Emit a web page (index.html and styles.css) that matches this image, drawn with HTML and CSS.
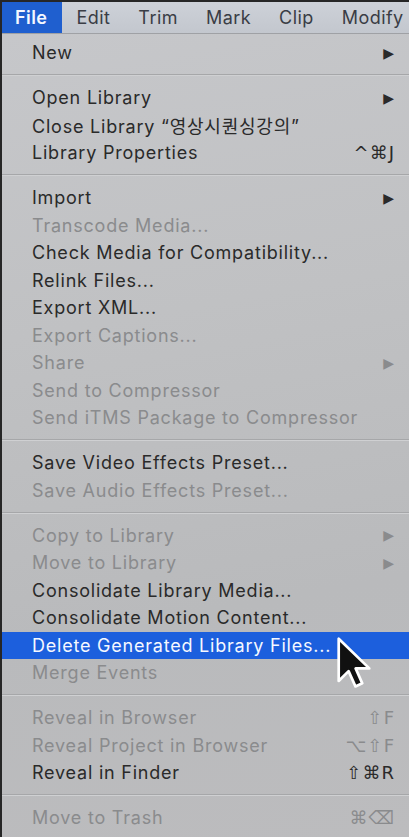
FILE: index.html
```html
<!DOCTYPE html>
<html lang="en">
<head>
<meta charset="utf-8">
<link rel="stylesheet" href="styles.css">
</head>
<body>
<div class="screen">
  <div class="menubar">
    <span class="title active">File</span>
    <span class="title">Edit</span>
    <span class="title">Trim</span>
    <span class="title">Mark</span>
    <span class="title">Clip</span>
    <span class="title">Modify</span>
  </div>
  <div class="menu">
    <div class="item"><span>New</span><span class="arrow">▶</span></div>
    <div class="sep"></div>
    <div class="item"><span>Open Library</span><span class="arrow">▶</span></div>
    <div class="item"><span>Close Library “영상시퀀싱강의”</span></div>
    <div class="item"><span>Library Properties</span><span class="key">^⌘J</span></div>
    <div class="sep"></div>
    <div class="item"><span>Import</span><span class="arrow">▶</span></div>
    <div class="item off"><span>Transcode Media...</span></div>
    <div class="item"><span>Check Media for Compatibility...</span></div>
    <div class="item"><span>Relink Files...</span></div>
    <div class="item"><span>Export XML...</span></div>
    <div class="item off"><span>Export Captions...</span></div>
    <div class="item off"><span>Share</span><span class="arrow">▶</span></div>
    <div class="item off"><span>Send to Compressor</span></div>
    <div class="item off"><span>Send iTMS Package to Compressor</span></div>
    <div class="sep"></div>
    <div class="item"><span>Save Video Effects Preset...</span></div>
    <div class="item off"><span>Save Audio Effects Preset...</span></div>
    <div class="sep"></div>
    <div class="item off"><span>Copy to Library</span><span class="arrow">▶</span></div>
    <div class="item off"><span>Move to Library</span><span class="arrow">▶</span></div>
    <div class="item"><span>Consolidate Library Media...</span></div>
    <div class="item"><span>Consolidate Motion Content...</span></div>
    <div class="item hl"><span>Delete Generated Library Files...</span>
      <svg class="cursor" viewBox="0 0 20 30" width="36" height="54" aria-hidden="true">
        <path d="M1.5 1.5 L1.5 25 L7 19.5 L10.8 28 L14.6 26.3 L10.9 18 L18.5 18 Z" fill="#111" stroke="#fff" stroke-width="1.5" stroke-linejoin="round"/>
      </svg>
    </div>
    <div class="item off"><span>Merge Events</span></div>
    <div class="sep"></div>
    <div class="item off"><span>Reveal in Browser</span><span class="key">⇧F</span></div>
    <div class="item off"><span>Reveal Project in Browser</span><span class="key">⌥⇧F</span></div>
    <div class="item"><span>Reveal in Finder</span><span class="key">⇧⌘R</span></div>
    <div class="sep"></div>
    <div class="item off"><span>Move to Trash</span><span class="key">⌘⌫</span></div>
  </div>
</div>
</body>
</html>
```

FILE: styles.css
```css
html, body {
  margin: 0;
  padding: 0;
  background: #262626;
  width: 409px;
  height: 837px;
  overflow: hidden;
}

.screen {
  padding: 2px 0 0 2px;
  height: 835px;
  font-family: Inter, "Noto Sans", "Noto Sans CJK KR", sans-serif;
  font-size: 18px;
  letter-spacing: 0.78px;
  color: #2a2a2a;
}

.menubar {
  height: 31px;
  display: flex;
  align-items: center;
  background: linear-gradient(#cdd1d8, #c3c7ce);
  border-bottom: 1px solid #9fa1a5;
  letter-spacing: 0.45px;
}

.title {
  height: 100%;
  display: flex;
  align-items: center;
  padding: 0 14px;
  color: #3a3d45;
  font-size: 18px;
}

.title.active {
  background: #1f5fcf;
  color: #f4f7ff;
  font-weight: 600;
  padding: 0 15px 0 13px;
}

.menu {
  height: 798px;
  padding-top: 5px;
  background: linear-gradient(170deg, #c6c7ca 0%, #c0c1c3 35%, #b9babc 70%, #bcbcbe 100%);
}

.item {
  position: relative;
  height: 27.5px;
  display: flex;
  align-items: center;
  justify-content: space-between;
  padding: 0 14px 0 30px;
  white-space: nowrap;
}

.item.off {
  color: #8a8b8d;
}

.item.hl {
  background: #1c5fdd;
  color: #f5f8ff;
}

.arrow {
  font-family: "DejaVu Sans", sans-serif;
  font-size: 14px;
  letter-spacing: 0;
  padding-right: 1px;
}

.key {
  font-family: "DejaVu Sans", "Noto Sans", sans-serif;
  font-size: 18px;
  letter-spacing: 1px;
}

.sep {
  height: 17.5px;
  display: flex;
  align-items: center;
}

.sep::before {
  content: "";
  display: block;
  width: 100%;
  height: 2px;
  background: linear-gradient(#a6a7a9 50%, #cfd0d2 50%);
}

.cursor {
  position: absolute;
  left: 334px;
  top: 4px;
  filter: blur(0.4px);
}
```
